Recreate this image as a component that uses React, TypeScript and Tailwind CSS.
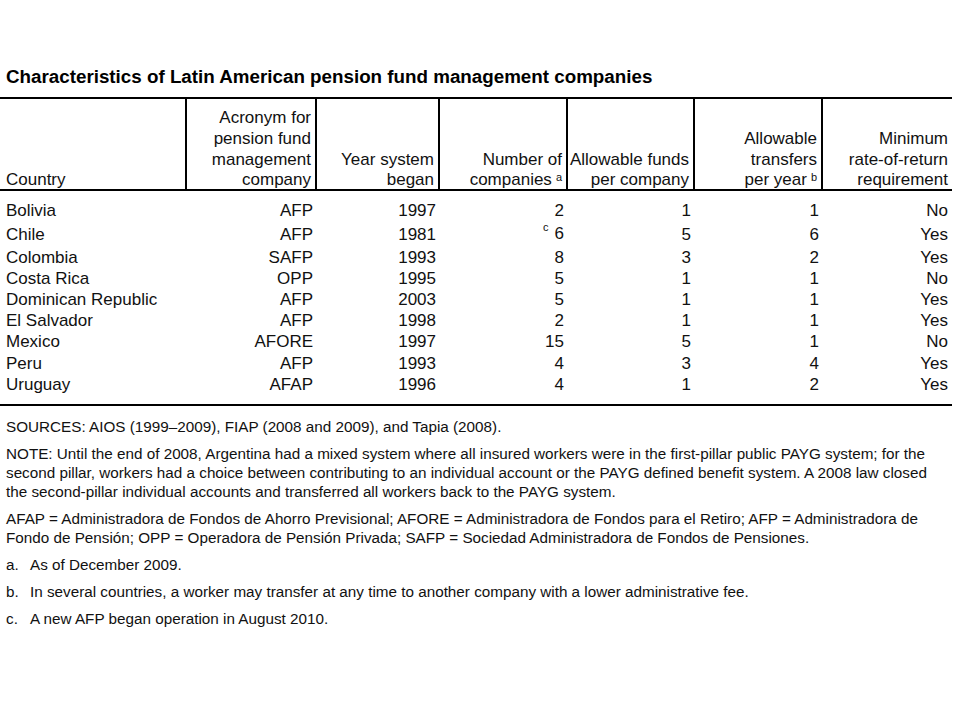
import React from 'react';

type Row = [string, string, string, string, string, string, string];

const rows: Row[] = [
  ['Bolivia', 'AFP', '1997', '2', '1', '1', 'No'],
  ['Chile', 'AFP', '1981', '6', '5', '6', 'Yes'],
  ['Colombia', 'SAFP', '1993', '8', '3', '2', 'Yes'],
  ['Costa Rica', 'OPP', '1995', '5', '1', '1', 'No'],
  ['Dominican Republic', 'AFP', '2003', '5', '1', '1', 'Yes'],
  ['El Salvador', 'AFP', '1998', '2', '1', '1', 'Yes'],
  ['Mexico', 'AFORE', '1997', '15', '5', '1', 'No'],
  ['Peru', 'AFP', '1993', '4', '3', '4', 'Yes'],
  ['Uruguay', 'AFAP', '1996', '4', '1', '2', 'Yes'],
];

const rowH = ['h-[23px]', 'h-[25px]', 'h-[21px]', 'h-[21px]', 'h-[21px]', 'h-[21px]', 'h-[21px]', 'h-[22px]', 'h-[21px]'];

const cols = 'grid grid-cols-[187px_130px_123px_128px_127px_128px_129px]';

function Sup({ children }: { children: React.ReactNode }) {
  return <sup className="text-[11px] relative -top-[4px] ml-[4px]">{children}</sup>;
}

function HeadCell({ children, last }: { children: React.ReactNode; last?: boolean }) {
  return (
    <div className={`flex items-end justify-end text-right pr-[4px] leading-[20.7px] ${last ? '' : 'border-r-2 border-black'}`}>
      <div className="-mb-[2px]">{children}</div>
    </div>
  );
}

export default function App() {
  return (
    <div className="w-[960px] h-[720px] bg-white text-[#111] font-['Liberation_Sans',Arial,sans-serif] overflow-hidden">
      <div className="pt-[65px] pl-[6px] text-[18.8px] font-bold leading-[24px] text-black">
        Characteristics of Latin American pension fund management companies
      </div>

      <div className="mt-[8px] w-[952px] text-[17px]">
        {/* header */}
        <div className={`${cols} h-[94px] border-t-2 border-b-2 border-black`}>
          <div className="flex items-end pl-[6px] leading-[20.7px] border-r-2 border-black">
            <div className="-mb-[2px]">Country</div>
          </div>
          <HeadCell>Acronym for<br />pension fund<br />management<br />company</HeadCell>
          <HeadCell>Year system<br />began</HeadCell>
          <HeadCell>Number of<br />companies<Sup>a</Sup></HeadCell>
          <HeadCell>Allowable funds<br />per company</HeadCell>
          <HeadCell>Allowable<br />transfers<br />per year<Sup>b</Sup></HeadCell>
          <HeadCell last>Minimum<br />rate-of-return<br />requirement</HeadCell>
        </div>

        {/* body */}
        <div className="pt-[8px] pb-[9px] border-b-2 border-black">
          {rows.map((r, ri) => (
            <div key={r[0]} className={`${cols} ${rowH[ri]} items-center leading-[21px]`}>
              <div className="pl-[6px]">{r[0]}</div>
              {r.slice(1).map((v, i) => (
                <div key={i} className="text-right pr-[4px]">
                  {r[0] === 'Chile' && i === 2 && <span className="text-[11px] relative -top-[8px] mr-[6px]">c</span>}
                  {v}
                </div>
              ))}
            </div>
          ))}
        </div>
      </div>

      <div className="pl-[6px] pt-[11px] text-[15.25px] leading-[19px] flex flex-col gap-[8px]">
        <p>SOURCES: AIOS (1999–2009), FIAP (2008 and 2009), and Tapia (2008).</p>
        <p>
          NOTE: Until the end of 2008, Argentina had a mixed system where all insured workers were in the first-pillar public PAYG system; for the
          <br />
          second pillar, workers had a choice between contributing to an individual account or the PAYG defined benefit system. A 2008 law closed
          <br />
          the second-pillar individual accounts and transferred all workers back to the PAYG system.
        </p>
        <p>
          AFAP = Administradora de Fondos de Ahorro Previsional; AFORE = Administradora de Fondos para el Retiro; AFP = Administradora de
          <br />
          Fondo de Pensión; OPP = Operadora de Pensión Privada; SAFP = Sociedad Administradora de Fondos de Pensiones.
        </p>
        {[
          ['a.', 'As of December 2009.'],
          ['b.', 'In several countries, a worker may transfer at any time to another company with a lower administrative fee.'],
          ['c.', 'A new AFP began operation in August 2010.'],
        ].map(([k, t]) => (
          <div key={k} className="flex">
            <span className="w-[24px] shrink-0">{k}</span>
            <span>{t}</span>
          </div>
        ))}
      </div>
    </div>
  );
}
